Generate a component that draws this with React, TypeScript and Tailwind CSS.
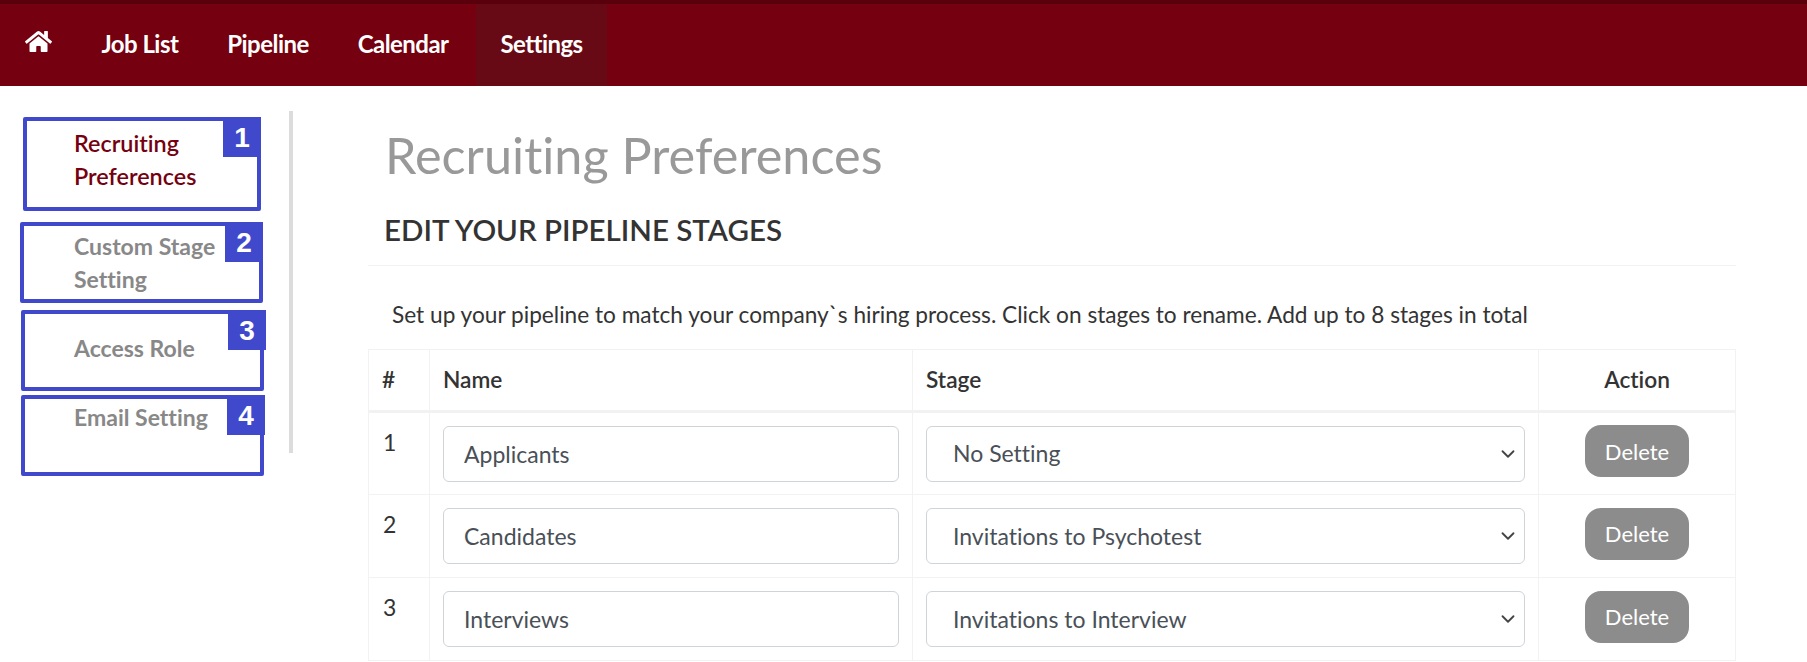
import React from 'react';
import { ChevronDown } from 'lucide-react';
import { FaHome } from 'react-icons/fa';

const stages = [
  { id: 1, name: 'Applicants', stage: 'No Setting' },
  { id: 2, name: 'Candidates', stage: 'Invitations to Psychotest' },
  { id: 3, name: 'Interviews', stage: 'Invitations to Interview' },
];

const navItems = ['Job List', 'Pipeline', 'Calendar', 'Settings'];

interface SideItemProps {
  number: number;
  className: string;
  badgeClassName: string;
  children: React.ReactNode;
}

const SideItem: React.FC<SideItemProps> = ({ number, className, badgeClassName, children }) => (
  <div className={`relative rounded-[2px] border-[4px] border-[#4049cc] text-[23px] leading-[33px] ${className}`}>
    {children}
    <span className={`absolute top-[-4px] flex h-[40px] w-[38px] items-center justify-center bg-[#4049cc] font-['Liberation_Sans',sans-serif] text-[28px] font-bold text-white ${badgeClassName}`}>
      {number}
    </span>
  </div>
);

const App: React.FC = () => {
  return (
    <div className="h-[662px] overflow-hidden bg-white font-['Lato',sans-serif] text-[22px] text-[#333] [font-variant-ligatures:none]">
      <nav className="flex h-[86px] items-stretch border-t-[4px] border-[#5a000c] bg-[#75000f] text-white">
        <a className="flex w-[77px] items-start justify-center pt-[24px] pr-[1px] text-[27px]"><FaHome /></a>
        {navItems.map((item) => (
          <a
            key={item}
            className={`flex items-center px-[24.5px] pb-[3px] text-[24px] font-bold tracking-[-0.55px] ${item === 'Settings' ? 'ml-[3px] bg-[#680a15]' : ''}`}
          >
            {item}
          </a>
        ))}
      </nav>

      <div className="flex">
        <aside className="flex w-[368px] shrink-0">
          <div className="flex w-[289px] flex-col">
            <SideItem number={1} className="ml-[23px] mt-[31px] h-[94px] w-[238px] pl-[47px] pt-[6px] font-semibold text-[#75000f]" badgeClassName="right-[-4px]">
              <span className="text-[23.4px]">Recruiting Preferences</span>
            </SideItem>
            <SideItem number={2} className="ml-[20px] mt-[11px] h-[81px] w-[243px] pl-[50px] pt-[4px] font-bold text-[#888]" badgeClassName="right-[-4px]">
              <span className="block w-[160px]">Custom Stage Setting</span>
            </SideItem>
            <SideItem number={3} className="ml-[21px] mt-[7px] h-[81px] w-[243px] pl-[49px] pt-[18px] font-bold text-[#888]" badgeClassName="right-[-6px]">
              Access Role
            </SideItem>
            <SideItem number={4} className="ml-[21px] mt-[4px] h-[81px] w-[243px] pl-[49px] pt-[2px] font-bold text-[#888]" badgeClassName="right-[-5px]">
              Email Setting
            </SideItem>
          </div>
          <div className="mt-[25px] h-[342px] w-[4px] bg-[#dcdcdc]" />
        </aside>

        <main className="w-[1368px] shrink-0">
          <h1 className="mt-[39px] pl-[17px] text-[50.4px] leading-[60px] font-normal text-[#999]">Recruiting Preferences</h1>
          <h2 className="mt-[27px] border-b border-[#f2f2f2] pb-[17px] pl-[16px] text-[29.5px] leading-[36px] font-semibold text-[#333]">EDIT YOUR PIPELINE STAGES</h2>
          <p className="mt-[35px] pl-[24px] text-[22.67px] leading-[28px] text-[#333]">
            Set up your pipeline to match your company`s hiring process. Click on stages to rename. Add up to 8 stages in total
          </p>
          <table className="mt-[20px] w-full table-fixed border-collapse">
            <thead>
              <tr className="h-[62px] border-b-[3px] border-[#f2f2f2] text-[22.7px]">
                <th className="w-[61px] border border-[#f2f2f2] pl-[13px] text-left font-semibold">#</th>
                <th className="w-[483px] border border-[#f2f2f2] pl-[13px] text-left font-semibold">Name</th>
                <th className="w-[626px] border border-[#f2f2f2] pl-[13px] text-left font-semibold">Stage</th>
                <th className="border border-[#f2f2f2] text-center font-semibold">Action</th>
              </tr>
            </thead>
            <tbody>
              {stages.map((row) => (
                <tr key={row.id} className="h-[83px]">
                  <td className="border border-[#f2f2f2] pl-[14px] pt-[12px] align-top text-[23px]">{row.id}</td>
                  <td className="border border-[#f2f2f2] px-[13px]">
                    <input
                      defaultValue={row.name}
                      className="h-[56px] w-full rounded-[6px] border border-[#ced4da] px-[20px] text-[23px] text-[#495057] outline-none"
                    />
                  </td>
                  <td className="border border-[#f2f2f2] px-[13px]">
                    <div className="relative">
                      <select
                        defaultValue={row.stage}
                        className="h-[56px] w-full appearance-none rounded-[6px] border border-[#ced4da] bg-white px-[26px] text-[23px] text-[#495057] outline-none"
                      >
                        <option>{row.stage}</option>
                      </select>
                      <ChevronDown size={22} strokeWidth={2} className="absolute right-[6px] top-[17px] text-[#444]" />
                    </div>
                  </td>
                  <td className="border border-[#f2f2f2] text-center">
                    <button className="mb-[5px] h-[52px] w-[104px] rounded-[16px] bg-[#8c8c8c] text-[22px] text-white">Delete</button>
                  </td>
                </tr>
              ))}
            </tbody>
          </table>
        </main>
      </div>
    </div>
  );
};

export default App;
